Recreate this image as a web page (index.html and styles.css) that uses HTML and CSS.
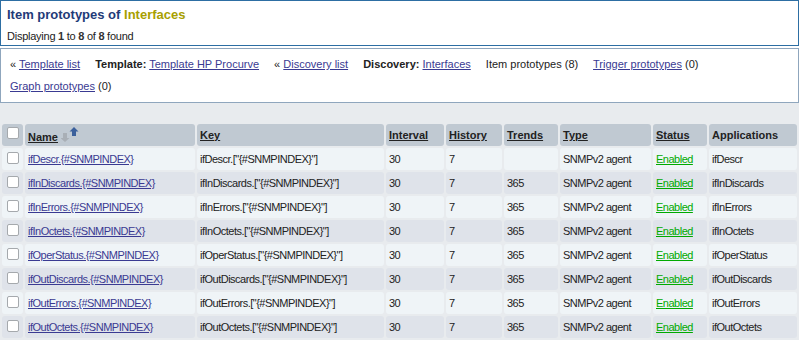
FILE: index.html
```html
<!DOCTYPE html>
<html lang="en">
<head>
    <meta charset="UTF-8">
    <title>Item prototypes</title>
    <link rel="stylesheet" href="styles.css">
</head>
<body>
<div class="top">
    <div class="header">
        <h1 class="header__title">Item prototypes of <span class="header__host">Interfaces</span></h1>
        <div class="header__count">Displaying <b>1</b> to <b>8</b> of <b>8</b> found</div>
    </div>
    <div class="nav">
        <span class="nav__item">&laquo; <a href="#">Template list</a></span>
        <span class="nav__item"><b>Template:</b> <a href="#">Template HP Procurve</a></span>
        <span class="nav__item">&laquo; <a href="#">Discovery list</a></span>
        <span class="nav__item"><b>Discovery:</b> <a href="#">Interfaces</a></span>
        <span class="nav__item">Item prototypes (8)</span>
        <span class="nav__item"><a href="#">Trigger prototypes</a> (0)</span>
        <span class="nav__item"><a href="#">Graph prototypes</a> (0)</span>
    </div>
</div>
<div class="content">
    <table class="list">
        <thead>
        <tr>
            <th class="list__check"><input type="checkbox" class="check"></th>
            <th class="list__name"><a href="#">Name</a><svg class="sort" width="18" height="15" viewBox="0 0 18 15">
                    <path d="M2 6h4v5h2.5L4 15 -0.5 11H2z" fill="#a9afb6"/>
                    <path d="M11 9h4V4.5h2.5L13 0 8.5 4.5H11z" fill="#3b609c"/>
                </svg>
            </th>
            <th class="list__key"><a href="#">Key</a></th>
            <th class="list__interval"><a href="#">Interval</a></th>
            <th class="list__history"><a href="#">History</a></th>
            <th class="list__trends"><a href="#">Trends</a></th>
            <th class="list__type"><a href="#">Type</a></th>
            <th class="list__status"><a href="#">Status</a></th>
            <th class="list__apps">Applications</th>
        </tr>
        </thead>
        <tbody>
        <tr>
            <td><input type="checkbox" class="check"></td>
            <td><a href="#">ifDescr.{#SNMPINDEX}</a></td>
            <td>ifDescr.["{#SNMPINDEX}"]</td>
            <td>30</td><td>7</td><td></td>
            <td>SNMPv2 agent</td>
            <td><a href="#" class="enabled">Enabled</a></td>
            <td>ifDescr</td>
        </tr>
        <tr>
            <td><input type="checkbox" class="check"></td>
            <td><a href="#">ifInDiscards.{#SNMPINDEX}</a></td>
            <td>ifInDiscards.["{#SNMPINDEX}"]</td>
            <td>30</td><td>7</td><td>365</td>
            <td>SNMPv2 agent</td>
            <td><a href="#" class="enabled">Enabled</a></td>
            <td>ifInDiscards</td>
        </tr>
        <tr>
            <td><input type="checkbox" class="check"></td>
            <td><a href="#">ifInErrors.{#SNMPINDEX}</a></td>
            <td>ifInErrors.["{#SNMPINDEX}"]</td>
            <td>30</td><td>7</td><td>365</td>
            <td>SNMPv2 agent</td>
            <td><a href="#" class="enabled">Enabled</a></td>
            <td>ifInErrors</td>
        </tr>
        <tr>
            <td><input type="checkbox" class="check"></td>
            <td><a href="#">ifInOctets.{#SNMPINDEX}</a></td>
            <td>ifInOctets.["{#SNMPINDEX}"]</td>
            <td>30</td><td>7</td><td>365</td>
            <td>SNMPv2 agent</td>
            <td><a href="#" class="enabled">Enabled</a></td>
            <td>ifInOctets</td>
        </tr>
        <tr>
            <td><input type="checkbox" class="check"></td>
            <td><a href="#">ifOperStatus.{#SNMPINDEX}</a></td>
            <td>ifOperStatus.["{#SNMPINDEX}"]</td>
            <td>30</td><td>7</td><td>365</td>
            <td>SNMPv2 agent</td>
            <td><a href="#" class="enabled">Enabled</a></td>
            <td>ifOperStatus</td>
        </tr>
        <tr>
            <td><input type="checkbox" class="check"></td>
            <td><a href="#">ifOutDiscards.{#SNMPINDEX}</a></td>
            <td>ifOutDiscards.["{#SNMPINDEX}"]</td>
            <td>30</td><td>7</td><td>365</td>
            <td>SNMPv2 agent</td>
            <td><a href="#" class="enabled">Enabled</a></td>
            <td>ifOutDiscards</td>
        </tr>
        <tr>
            <td><input type="checkbox" class="check"></td>
            <td><a href="#">ifOutErrors.{#SNMPINDEX}</a></td>
            <td>ifOutErrors.["{#SNMPINDEX}"]</td>
            <td>30</td><td>7</td><td>365</td>
            <td>SNMPv2 agent</td>
            <td><a href="#" class="enabled">Enabled</a></td>
            <td>ifOutErrors</td>
        </tr>
        <tr>
            <td><input type="checkbox" class="check"></td>
            <td><a href="#">ifOutOctets.{#SNMPINDEX}</a></td>
            <td>ifOutOctets.["{#SNMPINDEX}"]</td>
            <td>30</td><td>7</td><td>365</td>
            <td>SNMPv2 agent</td>
            <td><a href="#" class="enabled">Enabled</a></td>
            <td>ifOutOctets</td>
        </tr>
        </tbody>
    </table>
</div>
</body>
</html>
```

FILE: styles.css
```css
* {
    box-sizing: border-box;
}
html, body {
    margin: 0;
    padding: 0;
}
body {
    width: 799px;
    font-family: "Liberation Sans", Arial, sans-serif;
    font-size: 11px;
    color: #222;
    background-color: #e8ebee;
}
a {
    color: #3a3a92;
}
.top {
    background-color: #fff;
}
.header {
    height: 46px;
    padding: 6px 6px 0;
    border: 1px solid #2d6ea3;
}
.header__title {
    margin: 0;
    font-size: 13px;
    line-height: 15px;
    color: #1f3b78;
}
.header__host {
    color: #a8a000;
}
.header__count {
    margin-top: 7px;
    line-height: 14px;
    letter-spacing: -0.25px;
}
.header__count b {
    color: #333;
}
.nav {
    margin-top: 2px;
    height: 55px;
    padding: 4px 9px 0;
    border: 1px solid #8fa6bd;
    line-height: 22px;
}
.nav__item {
    margin-right: 12px;
    white-space: nowrap;
}
.content {
    padding-top: 19px;
}
.list {
    width: 799px;
    table-layout: fixed;
    border-spacing: 2px;
}
.list th,
.list td {
    height: 22px;
    padding: 0 3px;
    border-radius: 3px;
    text-align: left;
    vertical-align: middle;
    line-height: 14px;
    white-space: nowrap;
}
.list td {
    letter-spacing: -0.5px;
}
.list th {
    background-color: #c0c9d2;
    font-weight: bold;
}
.list th a {
    color: #222;
}
.list tbody tr:nth-child(odd) td {
    background-color: #eff4f7;
}
.list tbody tr:nth-child(even) td {
    background-color: #dfe3ea;
}
.list__check {
    width: 21px;
}
.list__name {
    width: 170px;
}
.list__key {
    width: 187px;
}
.list__interval {
    width: 58px;
}
.list__history {
    width: 56px;
}
.list__trends {
    width: 54px;
}
.list__type {
    width: 91px;
}
.list__status {
    width: 54px;
}
.list__apps {
    width: 88px;
}
.sort {
    margin-left: 3px;
    vertical-align: -1px;
}
.check {
    -webkit-appearance: none;
    appearance: none;
    display: block;
    width: 12px;
    height: 12px;
    margin: 0 0 0 2px;
    background-color: #fff;
    border: 1px solid #a5a9ad;
    border-radius: 2px;
}
.list thead .check {
    margin-top: -4px;
}
.list tbody .check {
    margin-top: -3px;
}
.enabled {
    color: #00aa00;
}
```
